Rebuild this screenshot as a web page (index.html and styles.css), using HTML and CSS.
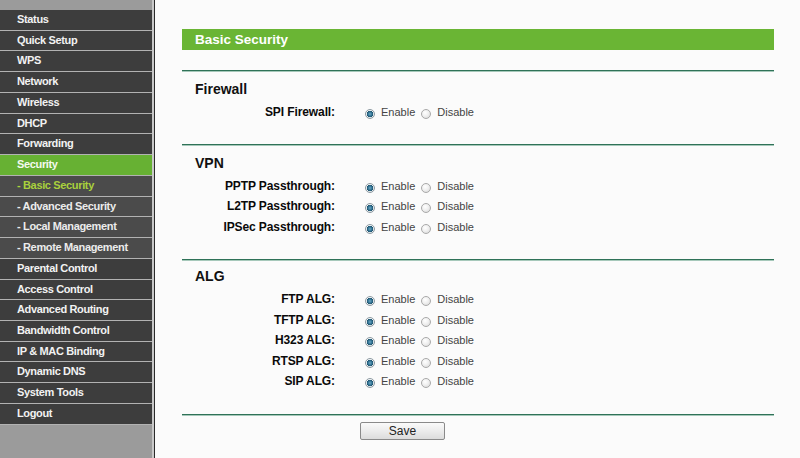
FILE: index.html
```html
<!DOCTYPE html>
<html>
<head>
<meta charset="utf-8">
<link rel="stylesheet" href="styles.css">
</head>
<body>
<div class="page">
  <nav class="sidebar">
    <ul class="menu">
      <li class="item">Status</li>
      <li class="item">Quick Setup</li>
      <li class="item">WPS</li>
      <li class="item">Network</li>
      <li class="item">Wireless</li>
      <li class="item">DHCP</li>
      <li class="item">Forwarding</li>
      <li class="item active">Security</li>
      <li class="item sub current">- Basic Security</li>
      <li class="item sub">- Advanced Security</li>
      <li class="item sub">- Local Management</li>
      <li class="item sub">- Remote Management</li>
      <li class="item">Parental Control</li>
      <li class="item">Access Control</li>
      <li class="item">Advanced Routing</li>
      <li class="item">Bandwidth Control</li>
      <li class="item">IP &amp; MAC Binding</li>
      <li class="item">Dynamic DNS</li>
      <li class="item">System Tools</li>
      <li class="item">Logout</li>
    </ul>
  </nav>
  <div class="divider"></div>
  <main class="content">
    <div class="titlebar">Basic Security</div>
    <div class="rule"></div>

    <section class="section">
      <h2 class="section-head">Firewall</h2>
      <div class="rows">
        <div class="row"><span class="label">SPI Firewall:</span><span class="radio on"></span><span class="opt">Enable</span><span class="radio"></span><span class="opt">Disable</span></div>
      </div>
    </section>
    <div class="rule"></div>

    <section class="section">
      <h2 class="section-head">VPN</h2>
      <div class="rows">
        <div class="row"><span class="label">PPTP Passthrough:</span><span class="radio on"></span><span class="opt">Enable</span><span class="radio"></span><span class="opt">Disable</span></div>
        <div class="row"><span class="label">L2TP Passthrough:</span><span class="radio on"></span><span class="opt">Enable</span><span class="radio"></span><span class="opt">Disable</span></div>
        <div class="row"><span class="label">IPSec Passthrough:</span><span class="radio on"></span><span class="opt">Enable</span><span class="radio"></span><span class="opt">Disable</span></div>
      </div>
    </section>
    <div class="rule"></div>

    <section class="section last">
      <h2 class="section-head">ALG</h2>
      <div class="rows">
        <div class="row"><span class="label">FTP ALG:</span><span class="radio on"></span><span class="opt">Enable</span><span class="radio"></span><span class="opt">Disable</span></div>
        <div class="row"><span class="label">TFTP ALG:</span><span class="radio on"></span><span class="opt">Enable</span><span class="radio"></span><span class="opt">Disable</span></div>
        <div class="row"><span class="label">H323 ALG:</span><span class="radio on"></span><span class="opt">Enable</span><span class="radio"></span><span class="opt">Disable</span></div>
        <div class="row"><span class="label">RTSP ALG:</span><span class="radio on"></span><span class="opt">Enable</span><span class="radio"></span><span class="opt">Disable</span></div>
        <div class="row"><span class="label">SIP ALG:</span><span class="radio on"></span><span class="opt">Enable</span><span class="radio"></span><span class="opt">Disable</span></div>
      </div>
    </section>
    <div class="rule"></div>

    <div class="actions">
      <button class="save">Save</button>
    </div>
  </main>
</div>
</body>
</html>
```

FILE: styles.css
```css
html, body {
  margin: 0;
  padding: 0;
  height: 100%;
  overflow: hidden;
}

body {
  font-family: "Liberation Sans", Arial, sans-serif;
  background: #fbfbfb;
}

.page {
  display: flex;
  height: 458px;
}

.sidebar {
  width: 152px;
  flex: none;
  background: #9b9b9b;
  padding-top: 10px;
  box-sizing: border-box;
}

.menu {
  list-style: none;
  margin: 0;
  padding: 0;
}

.item {
  height: 19.74px;
  line-height: 19.74px;
  border-bottom: 1px solid #b2b2b2;
  background: #3d3d3d;
  color: #f2f2f2;
  font-size: 11px;
  font-weight: bold;
  letter-spacing: -0.35px;
  padding-left: 17px;
  white-space: nowrap;
}

.item.active {
  background: #67b133;
  color: #f4f9ee;
}

.item.sub {
  background: #4b4b4b;
  color: #ececec;
}

.item.sub.current {
  color: #a9d13c;
}

.divider {
  width: 2px;
  flex: none;
  background: #c9c9c9;
  border-right: 1.5px solid #2a2a2a;
}

.content {
  flex: 1;
  padding: 29px 26px 0 27px;
  box-sizing: border-box;
}

.titlebar {
  height: 21px;
  line-height: 21px;
  background: #6ab534;
  color: #ffffff;
  font-size: 13.5px;
  font-weight: bold;
  padding-left: 13px;
}

.titlebar + .rule {
  margin-top: 20px;
}

.rule {
  border-top: 1px solid #2f7258;
  border-bottom: 1px solid #a6c8ba;
}

.section {
  padding: 7px 0 22px;
}

.section.last {
  padding-top: 5px;
}

.section.last .rows {
  margin-top: 3px;
}

.section-head {
  margin: 0;
  font-size: 14px;
  font-weight: bold;
  line-height: 20px;
  color: #111;
  padding-left: 13px;
}

.rows {
  margin-top: 2.5px;
}

.row {
  display: flex;
  align-items: center;
  height: 20.5px;
  font-size: 11px;
}

.label {
  width: 153px;
  text-align: right;
  font-size: 12px;
  font-weight: bold;
  color: #0a0a0a;
  letter-spacing: -0.1px;
  box-sizing: border-box;
}

.radio {
  width: 10px;
  height: 10px;
  border-radius: 50%;
  box-sizing: border-box;
  border: 1px solid #a9a9a9;
  background: radial-gradient(circle at 40% 35%, #ffffff 0%, #f0f0f0 45%, #d6d6d6 100%);
  margin-left: 6px;
  margin-top: 4px;
  flex: none;
}

.label + .radio {
  margin-left: 30px;
}

.radio.on {
  border-color: #8d9aa2;
  background:
    radial-gradient(circle at 50% 50%, #6aa7c4 0%, #2f6f8f 38%, #1f5570 52%, transparent 56%),
    radial-gradient(circle at 40% 35%, #ffffff 0%, #eef2f4 50%, #cfd6da 100%);
}

.opt {
  color: #444;
  margin-left: 6px;
}

.actions {
  display: flex;
  padding-left: 178px;
  padding-top: 6px;
}

.save {
  width: 85px;
  height: 18px;
  padding: 0;
  font-family: "Liberation Sans", Arial, sans-serif;
  font-size: 12px;
  color: #222;
  border: 1px solid #8a8a8a;
  border-radius: 2px;
  background: linear-gradient(#fafafa, #ececec 50%, #dcdcdc);
}
```
